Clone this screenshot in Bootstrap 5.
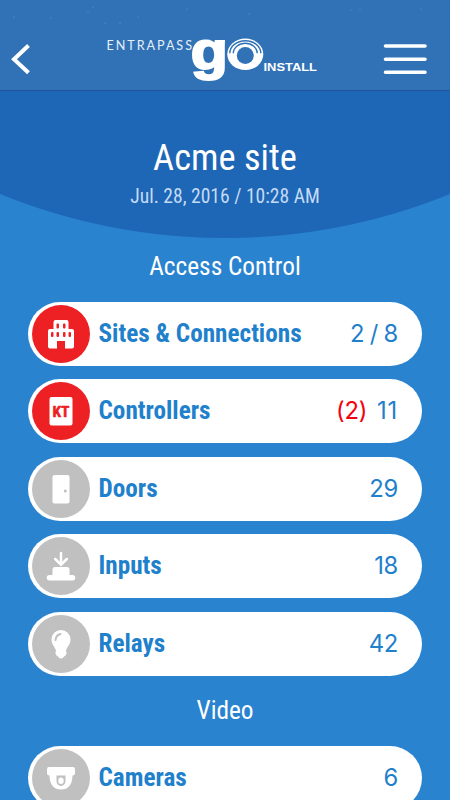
<!DOCTYPE html>
<html lang="en">
<head>
<meta charset="utf-8">
<meta name="viewport" content="width=device-width, initial-scale=1">
<title>EntraPass Go Install</title>
<link href="https://cdn.jsdelivr.net/npm/bootstrap@5.3.0/dist/css/bootstrap.min.css" rel="stylesheet">
<style>
html, body { height: 800px; overflow: hidden; }
body { font-family: "Roboto Condensed", Roboto, "Liberation Sans", sans-serif; font-stretch: 75%; background: radial-gradient(circle at 225px -359px, #1e66b6 596.5px, #2983cf 597.5px); color: #fff; }
.topbar { height: 91px; background: #3172b6; border-bottom: 1px solid #21569a; }
.topbar svg, .disc svg { display: block; }
.hero { height: 148px; padding-top: 43px; }
.fit { display: inline-block; white-space: nowrap; }
.site-name { font-size: 36.5px; line-height: 48px; font-weight: 400; }
.stamp { font-size: 19.6px; line-height: 24px; margin-top: 3px; color: #c4dbf5; }
.section-title { font-size: 25.3px; line-height: 30px; font-weight: 400; }
.access { margin-top: 13px; margin-bottom: 19.8px; }
.video { margin-top: 20px; margin-bottom: 20px; }
.rows { gap: 13.5px; padding: 0 28px; }
.pill { height: 64px; padding-left: 3.5px; padding-right: 24px; }
.disc { width: 58px; height: 58px; background: #c0c0c0; }
.disc.alert-red { background: #ed2024; }
.label { font-size: 25.2px; font-weight: 700; color: #1f80cb; margin-left: 9px; }
.count { font-family: Inter, Roboto, sans-serif; font-stretch: 100%; font-size: 23.8px; font-weight: 400; letter-spacing: -.3px; word-spacing: -.8px; color: #1f80cb; }
.fault { color: #f50010; margin-right: 10px; }
.ones { letter-spacing: .8px; }
</style>
</head>
<body>
<header class="topbar">
<svg width="450" height="90" viewBox="0 0 450 90">
  <g fill="#6f9cc8"><circle cx="14" cy="17" r=".6"/><circle cx="51" cy="18" r=".5"/><circle cx="88" cy="12" r=".5"/><circle cx="93" cy="7" r=".5"/><circle cx="105" cy="23" r=".6"/><circle cx="120" cy="23" r=".6"/><circle cx="138" cy="17" r=".5"/><circle cx="187" cy="9" r=".5"/><circle cx="249" cy="14" r=".6"/><circle cx="351" cy="10" r=".5"/><circle cx="360" cy="10" r=".5"/><circle cx="421" cy="9" r=".5"/></g>
  <path d="M28.500 45.500 14 59.200l14.500 13.500" fill="none" stroke="#fff" stroke-width="4"/>
  <text x="106.500" y="50" font-family="Lato, sans-serif" font-size="12.600" fill="#e4effa" textLength="85.500" style="font-stretch:100%">ENTRAPASS</text>
  <text transform="translate(190.800 69) scale(1.19 1)" font-family="Liberation Sans, sans-serif" font-weight="700" font-size="51" fill="#fff" stroke="#fff" stroke-width="2">g</text>
  <ellipse cx="245.300" cy="54.300" rx="18" ry="15.700" fill="#fff"/>
  <g fill="none" stroke="#3172b6" stroke-width="1.400"><path d="M229.800 53.300a15.500 12.600 0 0 1 31 0M233.300 53.300a12 10 0 0 1 24 0"/></g>
  <ellipse cx="245.300" cy="55.500" rx="8.500" ry="8.500" fill="#3172b6"/>
  <text x="263.500" y="71" font-family="Liberation Sans, sans-serif" font-weight="700" font-size="11.500" fill="#fff" textLength="53.500" lengthAdjust="spacingAndGlyphs">INSTALL</text>
  <path d="M385.500 46h39.500M385.500 59.200h39.500M385.500 72.200h39.500" stroke="#fff" stroke-width="3.600" stroke-linecap="round"/>
</svg>
</header>
<main>
  <section class="hero text-center">
    <h1 class="site-name mb-0"><span class="fit">Acme site</span></h1>
    <p class="stamp mb-0"><span class="fit">Jul. 28, 2016 / 10:28 AM</span></p>
  </section>
  <h2 class="section-title access text-center"><span class="fit">Access Control</span></h2>
  <div class="rows d-flex flex-column">
    <div class="pill d-flex align-items-center bg-white rounded-pill">
      <div class="disc alert-red rounded-circle flex-shrink-0"><svg width="58" height="58" viewBox="0 0 58 58"><path fill="#fff" d="M18 24h3.500v-7q0-2 2-2h11q2 0 2 2v7H40q2 0 2 2v15.500q0 2-2 2h-7V36h-8v7.500h-7q-2 0-2-2V26q0-2 2-2z"/><g fill="#ed2024"><rect x="24.500" y="18.500" width="2.500" height="5" rx="1"/><rect x="31" y="18.500" width="2.500" height="5" rx="1"/><rect x="19" y="27" width="2.500" height="5" rx="1"/><rect x="24.500" y="27" width="2.500" height="5" rx="1"/><rect x="31" y="27" width="2.500" height="5" rx="1"/><rect x="36.500" y="27" width="2.500" height="5" rx="1"/></g></svg></div>
      <span class="label fit">Sites &amp; Connections</span><span class="count ms-auto">2 / 8</span>
    </div>
    <div class="pill d-flex align-items-center bg-white rounded-pill">
      <div class="disc alert-red rounded-circle flex-shrink-0"><svg width="58" height="58" viewBox="0 0 58 58"><rect x="17.500" y="15" width="23" height="28.500" rx="2" fill="#fff"/><text x="20.500" y="34.800" font-family="Roboto, sans-serif" font-weight="700" font-size="15.500" fill="#ed2024" stroke="#ed2024" stroke-width=".5" stroke-linejoin="round" textLength="17" lengthAdjust="spacingAndGlyphs">KT</text></svg></div>
      <span class="label fit">Controllers</span><span class="count ms-auto"><span class="fault">(2)</span><span class="ones">11</span></span>
    </div>
    <div class="pill d-flex align-items-center bg-white rounded-pill">
      <div class="disc rounded-circle flex-shrink-0"><svg width="58" height="58" viewBox="0 0 58 58"><rect x="20.500" y="15" width="17" height="28.500" rx="2" fill="#fff"/><circle cx="33.300" cy="31" r="1.500" fill="#c0c0c0"/></svg></div>
      <span class="label fit">Doors</span><span class="count ms-auto">29</span>
    </div>
    <div class="pill d-flex align-items-center bg-white rounded-pill">
      <div class="disc rounded-circle flex-shrink-0"><svg width="58" height="58" viewBox="0 0 58 58"><path d="M29 16v11M23.200 22l5.800 5.700 5.800-5.700" fill="none" stroke="#fff" stroke-width="2.500" stroke-linecap="round"/><path fill="#fff" d="M20.500 38v-5.500q0-2.500 2.500-2.500h12q2.500 0 2.500 2.500V38h3a2.700 2.700 0 0 1 0 5.500h-23a2.700 2.700 0 0 1 0-5.500z"/></svg></div>
      <span class="label fit">Inputs</span><span class="count ms-auto">18</span>
    </div>
    <div class="pill d-flex align-items-center bg-white rounded-pill">
      <div class="disc rounded-circle flex-shrink-0"><svg width="58" height="58" viewBox="0 0 58 58"><path fill="#fff" d="M29 15a9.500 9.500 0 0 1 9.500 9.500c0 5.500-4.500 8-4.500 12q1.500 1 0 3-.5 1.500-2 2Q31 43.500 29 43.500T26 41.500q-1.500-.5-2-2-1.500-2 0-3c0-4-4.500-6.500-4.500-12A9.500 9.500 0 0 1 29 15z"/><path d="M23.500 25q.5-5 5-6" fill="none" stroke="#c0c0c0" stroke-width="2" stroke-linecap="round"/></svg></div>
      <span class="label fit">Relays</span><span class="count ms-auto">42</span>
    </div>
  </div>
  <h2 class="section-title video text-center"><span class="fit">Video</span></h2>
  <div class="rows d-flex flex-column">
    <div class="pill d-flex align-items-center bg-white rounded-pill">
      <div class="disc rounded-circle flex-shrink-0"><svg width="58" height="58" viewBox="0 0 58 58"><path fill="#fff" d="M17 18h24q2 0 2 2v4.500q0 2-2.500 2-.5 14-11.500 14T17.500 26.500q-2.500 0-2.500-2V20q0-2 2-2z"/><path fill="#c0c0c0" d="M24.500 26.500h9v5.500a4.500 5 0 0 1-9 0z"/><ellipse cx="29" cy="31.700" rx="2.700" ry="3.200" fill="#fff"/></svg></div>
      <span class="label fit">Cameras</span><span class="count ms-auto">6</span>
    </div>
  </div>
</main>
<script src="https://cdn.jsdelivr.net/npm/bootstrap@5.3.0/dist/js/bootstrap.bundle.min.js"></script>
</body>
</html>
